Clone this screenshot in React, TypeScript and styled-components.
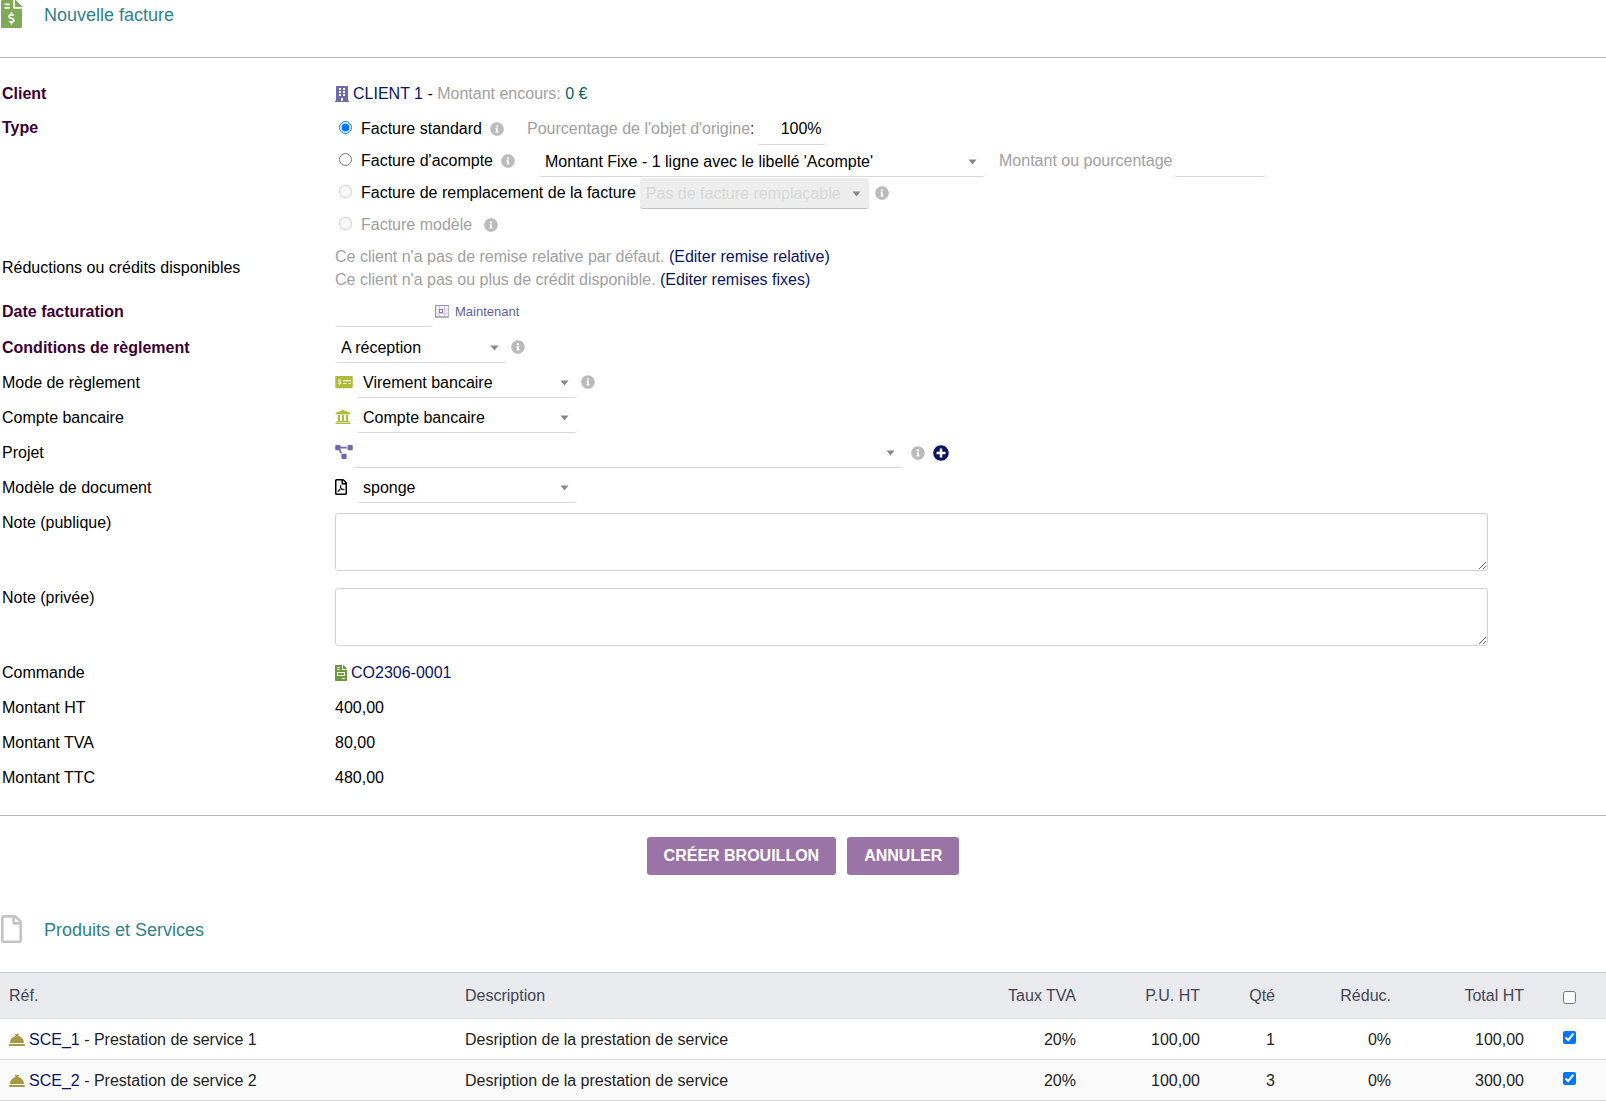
import React from "react";
import styled, { createGlobalStyle } from "styled-components";
import {
  FaBuilding,
  FaConciergeBell,
  FaFileInvoice,
  FaFileInvoiceDollar,
  FaInfoCircle,
  FaMoneyCheckAlt,
  FaPlusCircle,
  FaProjectDiagram,
  FaRegFile,
  FaRegFilePdf,
  FaUniversity,
} from "react-icons/fa";

const colors = {
  text: "#000",
  muted: "#a0a0a0",
  link: "#0a1464",
  required: "#3c0032",
  title: "#2e828a",
  amount: "#006666",
  line: "#b9b9b9",
  field: "#d8d8d8",
  button: "#9b74a7",
  project: "#6c6aa8",
  bank: "#b0bb39",
};

const GlobalStyle = createGlobalStyle`
  *, *::before, *::after { box-sizing: border-box; }
  body {
    margin: 0;
    background: #fff;
    color: ${colors.text};
    font-family: Arial, "Liberation Sans", sans-serif;
    font-size: 16px;
    line-height: 20px;
  }
  input, select, textarea, button { font: inherit; color: inherit; }
`;

const Icon = styled.span<{ $size?: number; $width?: number; $color?: string }>`
  display: inline-flex;
  flex: none;
  color: ${(p) => p.$color ?? "inherit"};
  svg {
    display: block;
    width: ${(p) => p.$width ?? p.$size ?? 16}px;
    height: ${(p) => p.$size ?? 16}px;
  }
`;

const IconSlot = styled(Icon)<{ $slot?: number }>`
  width: ${(p) => p.$slot ?? 22}px;
  margin-bottom: 2px;
`;

const TitleBar = styled.header`
  display: flex;
  align-items: center;
  gap: 22px;
  height: 28px;
  padding-left: 1px;
`;

const Title = styled.h1`
  margin: 0;
  padding-top: 2px;
  font-size: 18px;
  font-weight: 400;
  color: ${colors.title};
`;

const FormCard = styled.div`
  margin-top: 29px;
  padding: 19px 2px 20px;
  border-top: 1px solid ${colors.line};
  border-bottom: 1px solid ${colors.line};
`;

const FormRow = styled.div<{ $height?: number; $top?: boolean }>`
  display: grid;
  grid-template-columns: 333px 1fr;
  align-items: ${(p) => (p.$top ? "start" : "center")};
  min-height: ${(p) => p.$height ?? 35}px;
`;

const FieldLabel = styled.label<{ $required?: boolean; $top?: boolean }>`
  padding-top: ${(p) => (p.$top ? 8 : 0)}px;
  font-weight: ${(p) => (p.$required ? 700 : 400)};
  color: ${(p) => (p.$required ? colors.required : "inherit")};
`;

const Value = styled.div<{ $gap?: number }>`
  display: flex;
  align-items: center;
  gap: ${(p) => p.$gap ?? 0}px;
`;

const TypeOptions = styled.div`
  padding-top: 3px;
`;

const TypeOption = styled.div`
  display: flex;
  align-items: center;
  height: 32px;
`;

const Radio = styled.input.attrs({ type: "radio" })`
  width: 13px;
  height: 13px;
  margin: 0 9px 3px 4px;
`;

const OptionLabel = styled.label<{ $muted?: boolean; $gap?: number }>`
  margin-right: ${(p) => p.$gap ?? 4}px;
  color: ${(p) => (p.$muted ? colors.muted : "inherit")};
`;

const SideLabel = styled.label`
  margin: 0 2px 0 23px;
  color: ${colors.muted};
`;

const NextLabel = styled(SideLabel)`
  margin-left: 14px;
`;

const SelectGroup = styled.span`
  display: inline-flex;
  margin-left: 24px;
`;

const Colon = styled.span`
  color: #443322;
`;

const TextInput = styled.input.attrs({ type: "text" })<{ $width: number }>`
  width: ${(p) => p.$width}px;
  height: 31px;
  padding: 0 4px;
  border: 0;
  border-bottom: 1px solid ${colors.field};
  border-radius: 3px;
  background: transparent;
  text-align: right;
`;

const SelectBox = styled.span<{ $width: number }>`
  position: relative;
  display: inline-flex;
  width: ${(p) => p.$width}px;
`;

const SelectField = styled.select`
  appearance: none;
  width: 100%;
  height: 31px;
  padding: 2px 24px 0 6px;
  border: 0;
  border-bottom: 1px solid ${colors.field};
  border-radius: 3px;
  background: transparent;
  &:disabled {
    padding-right: 20px;
    border-bottom-color: #c0c0c0;
    background: #ededed;
    color: #d8d8d8;
    opacity: 1;
  }
`;

const Caret = styled.svg`
  position: absolute;
  top: 13px;
  right: 8px;
  width: 9px;
  height: 6px;
  fill: #888;
  pointer-events: none;
`;

const Info = styled(Icon).attrs({ $size: 14, $color: "#bbb" })<{ $gap?: number }>`
  margin-left: ${(p) => p.$gap ?? 4}px;
`;

const SelectInfo = styled(Info)`
  margin-bottom: 2px;
`;

const Link = styled.a`
  color: ${colors.link};
  text-decoration: none;
`;

const AddLink = styled(Link)`
  display: inline-flex;
  margin-left: 8px;
`;

const Muted = styled.span`
  color: ${colors.muted};
`;

const Amount = styled.span`
  color: ${colors.amount};
`;

const Discounts = styled.div`
  line-height: 23px;
`;

const IconButton = styled.button`
  display: inline-flex;
  margin: 0 0 0 2px;
  padding: 0;
  border: 0;
  background: none;
`;

const NowButton = styled.button`
  margin: 0 0 0 6px;
  padding: 0;
  border: 0;
  background: none;
  font-size: 13px;
  color: #5f5e9e;
`;

const Note = styled.textarea`
  display: block;
  width: calc(100% - 116px);
  height: 58px;
  margin-top: 8px;
  border: 1px solid #d2d2d2;
  border-radius: 3px;
  background: #fff;
`;

const Actions = styled.div`
  display: flex;
  justify-content: center;
  gap: 11px;
  margin: 21px 0 40px;
`;

const ActionButton = styled.button`
  height: 38px;
  padding: 0 17px;
  border: 0;
  border-radius: 3px;
  background: ${colors.button};
  color: #fff;
  font-weight: 700;
  text-transform: uppercase;
`;

const ProductTable = styled.table`
  width: 100%;
  margin-top: 29px;
  border-collapse: separate;
  border-spacing: 0;
  border-top: 1px solid #ccc;
  table-layout: fixed;
  color: #222;
`;

const HeadCell = styled.th<{ $width?: string; $align?: string }>`
  width: ${(p) => p.$width ?? "auto"};
  height: 46px;
  padding: 0 9px;
  border-bottom: 1px solid #dcdcdc;
  background: #e8eaed;
  color: #444455;
  font-weight: 400;
  text-align: ${(p) => p.$align ?? "left"};
`;

const ProductRow = styled.tr`
  &:nth-child(even) { background: #fafafa; }
`;

const Cell = styled.td<{ $align?: string }>`
  height: 41px;
  padding: 2px 9px 0;
  border-bottom: 1px solid #d8d8d8;
  text-align: ${(p) => p.$align ?? "left"};
`;

const ProductRef = styled.div`
  display: flex;
  align-items: center;
  gap: 4px;
`;

const Checkbox = styled.input.attrs({ type: "checkbox" })`
  display: block;
  width: 13px;
  height: 13px;
  margin: 0 auto;
  thead & { margin-top: 4px; }
  tbody & { margin-bottom: 6px; }
`;

type SelectProps = {
  id: string;
  width: number;
  value: string;
  disabled?: boolean;
  label?: string;
};

function Select({ id, width, value, disabled, label }: SelectProps) {
  return (
    <SelectBox $width={width}>
      <SelectField id={id} disabled={disabled} aria-label={label} defaultValue={value}>
        <option value={value}>{value}</option>
      </SelectField>
      <Caret viewBox="0 0 9 6" aria-hidden="true">
        <path d="M0.5 0.5h8L4.5 5.5z" />
      </Caret>
    </SelectBox>
  );
}

function CalendarIcon() {
  return (
    <svg width="14" height="13" viewBox="0 0 14 13" aria-hidden="true">
      <rect x="0" y="0" width="14" height="13" fill="#b4b4bc" />
      <path fill="#f0f0f4" d="M1 1h12v11H1z" />
      <path fill="#d2d2da" d="M4 1h1v10H4zM9 1h1v10H9zM1 4h12v1H1zM1 8h12v1H1z" />
      <rect x="0" y="0" width="14" height="1" fill="#8f8fe0" />
      <rect x="0" y="0" width="1" height="12" fill="#8f8fe0" />
      <rect x="1" y="11" width="13" height="2" fill="#b4b4b8" />
      <rect x="4.5" y="4.5" width="3" height="3" fill="#fff" stroke="#a868b8" />
    </svg>
  );
}

const totals = [
  ["Montant HT", "400,00"],
  ["Montant TVA", "80,00"],
  ["Montant TTC", "480,00"],
];

const products = [
  { ref: "SCE_1", name: "Prestation de service 1", qty: "1", total: "100,00" },
  { ref: "SCE_2", name: "Prestation de service 2", qty: "3", total: "300,00" },
];

export default function App() {
  return (
    <>
      <GlobalStyle />
      <TitleBar>
        <Icon $size={28} $width={21} $color="#7fa857"><FaFileInvoiceDollar /></Icon>
        <Title>Nouvelle facture</Title>
      </TitleBar>

      <form onSubmit={(e) => e.preventDefault()}>
        <FormCard>
          <FormRow $height={33}>
            <FieldLabel as="span" $required>Client</FieldLabel>
            <Value $gap={4}>
              <Icon $width={14} $color={colors.project}><FaBuilding /></Icon>
              <span>
                <Link href="#client">CLIENT 1</Link> - <Muted>Montant encours: </Muted>
                <Amount>0 €</Amount>
              </span>
            </Value>
          </FormRow>

          <FormRow $height={133} $top>
            <FieldLabel as="span" $required $top>Type</FieldLabel>
            <TypeOptions role="radiogroup" aria-label="Type">
              <TypeOption>
                <Radio id="standard" name="type" defaultChecked />
                <OptionLabel htmlFor="standard">Facture standard</OptionLabel>
                <Info><FaInfoCircle /></Info>
                <SideLabel htmlFor="percent">
                  Pourcentage de l'objet d'origine<Colon>:</Colon>
                </SideLabel>
                <TextInput id="percent" $width={69} defaultValue="100%" />
              </TypeOption>
              <TypeOption>
                <Radio id="deposit" name="type" />
                <OptionLabel htmlFor="deposit">Facture d'acompte</OptionLabel>
                <Info><FaInfoCircle /></Info>
                <SelectGroup>
                  <Select
                    id="deposit-mode"
                    label="Type d'acompte"
                    width={446}
                    value="Montant Fixe - 1 ligne avec le libellé 'Acompte'"
                  />
                </SelectGroup>
                <NextLabel htmlFor="deposit-value">Montant ou pourcentage</NextLabel>
                <TextInput id="deposit-value" $width={92} />
              </TypeOption>
              <TypeOption>
                <Radio id="replacement" name="type" disabled />
                <OptionLabel htmlFor="replacement">
                  Facture de remplacement de la facture
                </OptionLabel>
                <Select
                  id="replaced"
                  label="Facture remplacée"
                  width={229}
                  value="Pas de facture remplaçable"
                  disabled
                />
                <Info $gap={6}><FaInfoCircle /></Info>
              </TypeOption>
              <TypeOption>
                <Radio id="template" name="type" disabled />
                <OptionLabel htmlFor="template" $muted $gap={8}>Facture modèle</OptionLabel>
                <Info><FaInfoCircle /></Info>
              </TypeOption>
            </TypeOptions>
          </FormRow>

          <FormRow $height={50}>
            <FieldLabel as="span">Réductions ou crédits disponibles</FieldLabel>
            <Discounts>
              <div>
                <Muted>Ce client n'a pas de remise relative par défaut. </Muted>
                <Link href="#relative">(Editer remise relative)</Link>
              </div>
              <div>
                <Muted>Ce client n'a pas ou plus de crédit disponible. </Muted>
                <Link href="#fixed">(Editer remises fixes)</Link>
              </div>
            </Discounts>
          </FormRow>

          <FormRow $height={37}>
            <FieldLabel htmlFor="date" $required>Date facturation</FieldLabel>
            <Value>
              <TextInput id="date" $width={98} />
              <IconButton type="button" aria-label="Choisir une date"><CalendarIcon /></IconButton>
              <NowButton type="button">Maintenant</NowButton>
            </Value>
          </FormRow>

          <FormRow>
            <FieldLabel htmlFor="terms" $required>Conditions de règlement</FieldLabel>
            <Value>
              <Select id="terms" width={172} value="A réception" />
              <SelectInfo><FaInfoCircle /></SelectInfo>
            </Value>
          </FormRow>

          <FormRow>
            <FieldLabel htmlFor="payment">Mode de règlement</FieldLabel>
            <Value>
              <IconSlot $size={14} $width={18} $color={colors.bank}><FaMoneyCheckAlt /></IconSlot>
              <Select id="payment" width={220} value="Virement bancaire" />
              <SelectInfo><FaInfoCircle /></SelectInfo>
            </Value>
          </FormRow>

          <FormRow>
            <FieldLabel htmlFor="account">Compte bancaire</FieldLabel>
            <Value>
              <IconSlot $color={colors.bank}><FaUniversity /></IconSlot>
              <Select id="account" width={220} value="Compte bancaire" />
            </Value>
          </FormRow>

          <FormRow>
            <FieldLabel htmlFor="project">Projet</FieldLabel>
            <Value>
              <IconSlot $size={14} $width={18} $slot={18} $color={colors.project}>
                <FaProjectDiagram />
              </IconSlot>
              <Select id="project" width={550} value="" />
              <Info $gap={8}><FaInfoCircle /></Info>
              <AddLink href="#new-project" aria-label="Créer un projet">
                <Icon><FaPlusCircle /></Icon>
              </AddLink>
            </Value>
          </FormRow>

          <FormRow>
            <FieldLabel htmlFor="model">Modèle de document</FieldLabel>
            <Value>
              <IconSlot $width={12}><FaRegFilePdf /></IconSlot>
              <Select id="model" width={220} value="sponge" />
            </Value>
          </FormRow>

          <FormRow $height={75} $top>
            <FieldLabel htmlFor="public-note" $top>Note (publique)</FieldLabel>
            <Note id="public-note" />
          </FormRow>

          <FormRow $height={75} $top>
            <FieldLabel htmlFor="private-note" $top>Note (privée)</FieldLabel>
            <Note id="private-note" />
          </FormRow>

          <FormRow>
            <FieldLabel as="span">Commande</FieldLabel>
            <Value $gap={4}>
              <Icon $width={12} $color="#699a3c"><FaFileInvoice /></Icon>
              <Link href="#order">CO2306-0001</Link>
            </Value>
          </FormRow>

          {totals.map(([label, amount]) => (
            <FormRow key={label}>
              <FieldLabel as="span">{label}</FieldLabel>
              <Value>{amount}</Value>
            </FormRow>
          ))}
        </FormCard>

        <Actions>
          <ActionButton type="submit">Créer brouillon</ActionButton>
          <ActionButton type="button">Annuler</ActionButton>
        </Actions>
      </form>

      <TitleBar>
        <Icon $size={28} $width={21} $color="#c4c4c4"><FaRegFile /></Icon>
        <Title as="h2">Produits et Services</Title>
      </TitleBar>

      <ProductTable>
        <thead>
          <tr>
            <HeadCell $width="456px">Réf.</HeadCell>
            <HeadCell>Description</HeadCell>
            <HeadCell $width="125px" $align="right">Taux TVA</HeadCell>
            <HeadCell $width="124px" $align="right">P.U. HT</HeadCell>
            <HeadCell $width="75px" $align="right">Qté</HeadCell>
            <HeadCell $width="116px" $align="right">Réduc.</HeadCell>
            <HeadCell $width="133px" $align="right">Total HT</HeadCell>
            <HeadCell $width="73px"><Checkbox aria-label="Tout sélectionner" /></HeadCell>
          </tr>
        </thead>
        <tbody>
          {products.map((p) => (
            <ProductRow key={p.ref}>
              <Cell>
                <ProductRef>
                  <Icon $color="#a69944"><FaConciergeBell /></Icon>
                  <span><Link href={`#${p.ref}`}>{p.ref}</Link> - {p.name}</span>
                </ProductRef>
              </Cell>
              <Cell>Desription de la prestation de service</Cell>
              <Cell $align="right">20%</Cell>
              <Cell $align="right">100,00</Cell>
              <Cell $align="right">{p.qty}</Cell>
              <Cell $align="right">0%</Cell>
              <Cell $align="right">{p.total}</Cell>
              <Cell><Checkbox defaultChecked aria-label={`Sélectionner ${p.ref}`} /></Cell>
            </ProductRow>
          ))}
        </tbody>
      </ProductTable>
    </>
  );
}
